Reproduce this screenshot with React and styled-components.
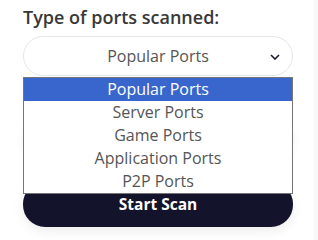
import React from "react";
import styled, { createGlobalStyle } from "styled-components";

const options = [
  "Popular Ports",
  "Server Ports",
  "Game Ports",
  "Application Ports",
  "P2P Ports",
];

const App = () => {
  return (
    <>
      <GlobalStyle />
      <Page>
        <Form>
          <Label>Type of ports scanned:</Label>
          <SelectWrap>
            <Select>
              Popular Ports
              <Chevron viewBox="0 0 10 6">
                <path d="M1 1l4 4 4-4" />
              </Chevron>
            </Select>
            <List>
              {options.map((opt, i) => (
                <Option key={opt} selected={i === 0}>
                  {opt}
                </Option>
              ))}
            </List>
          </SelectWrap>
          <Field />
          <Button>Start Scan</Button>
        </Form>
        <Gutter />
      </Page>
    </>
  );
};

export default App;

// Styled Components
const GlobalStyle = createGlobalStyle`
  html, body {
    margin: 0;
    padding: 0;
    background: #fff;
    font-family: "Open Sans", sans-serif;
  }
`;

const Page = styled.div`
  display: flex;
  width: 318px;
  height: 240px;
  overflow: hidden;
`;

const Form = styled.div`
  flex: 1;
  display: flex;
  flex-direction: column;
  padding: 5px 21px 0 23px;
`;

const Gutter = styled.div`
  width: 4px;
  background: #f8f8f8;
`;

const Label = styled.div`
  font-size: 18px;
  font-weight: 600;
  color: #383838;
  line-height: 24px;
  margin-bottom: 7px;
`;

const SelectWrap = styled.div`
  position: relative;
  z-index: 2;
`;

const Select = styled.div`
  position: relative;
  height: 40px;
  box-sizing: border-box;
  border: 1px solid #e6e6e6;
  border-radius: 20px;
  display: flex;
  align-items: center;
  justify-content: center;
  font-size: 16px;
  color: #555;
  background: #fff;
`;

const Chevron = styled.svg`
  position: absolute;
  right: 12px;
  top: 17px;
  width: 10px;
  height: 6px;
  fill: none;
  stroke: #1a1a33;
  stroke-width: 1.6;
`;

const List = styled.div`
  position: absolute;
  top: 41px;
  left: 0;
  right: 0;
  border: 1px solid #767676;
  background: #fff;
`;

const Option = styled.div`
  height: 23px;
  line-height: 23px;
  text-align: center;
  font-size: 16px;
  color: ${(p) => (p.selected ? "#fff" : "#555")};
  background: ${(p) => (p.selected ? "#3866cc" : "#fff")};
`;

const Field = styled.div`
  height: 40px;
  margin-top: 44px;
  border-radius: 20px;
  border: 1px solid #eee;
  box-shadow: 0 0 10px rgba(0, 0, 0, 0.06);
`;

const Button = styled.button`
  height: 45px;
  margin-top: 20px;
  border: none;
  border-radius: 22px;
  background: #14132c;
  color: #fff;
  font-family: "Open Sans", sans-serif;
  font-size: 15.5px;
  font-weight: 700;
  box-shadow: 0 4px 12px rgba(0, 0, 0, 0.08);
  padding-top: 0;
`;
